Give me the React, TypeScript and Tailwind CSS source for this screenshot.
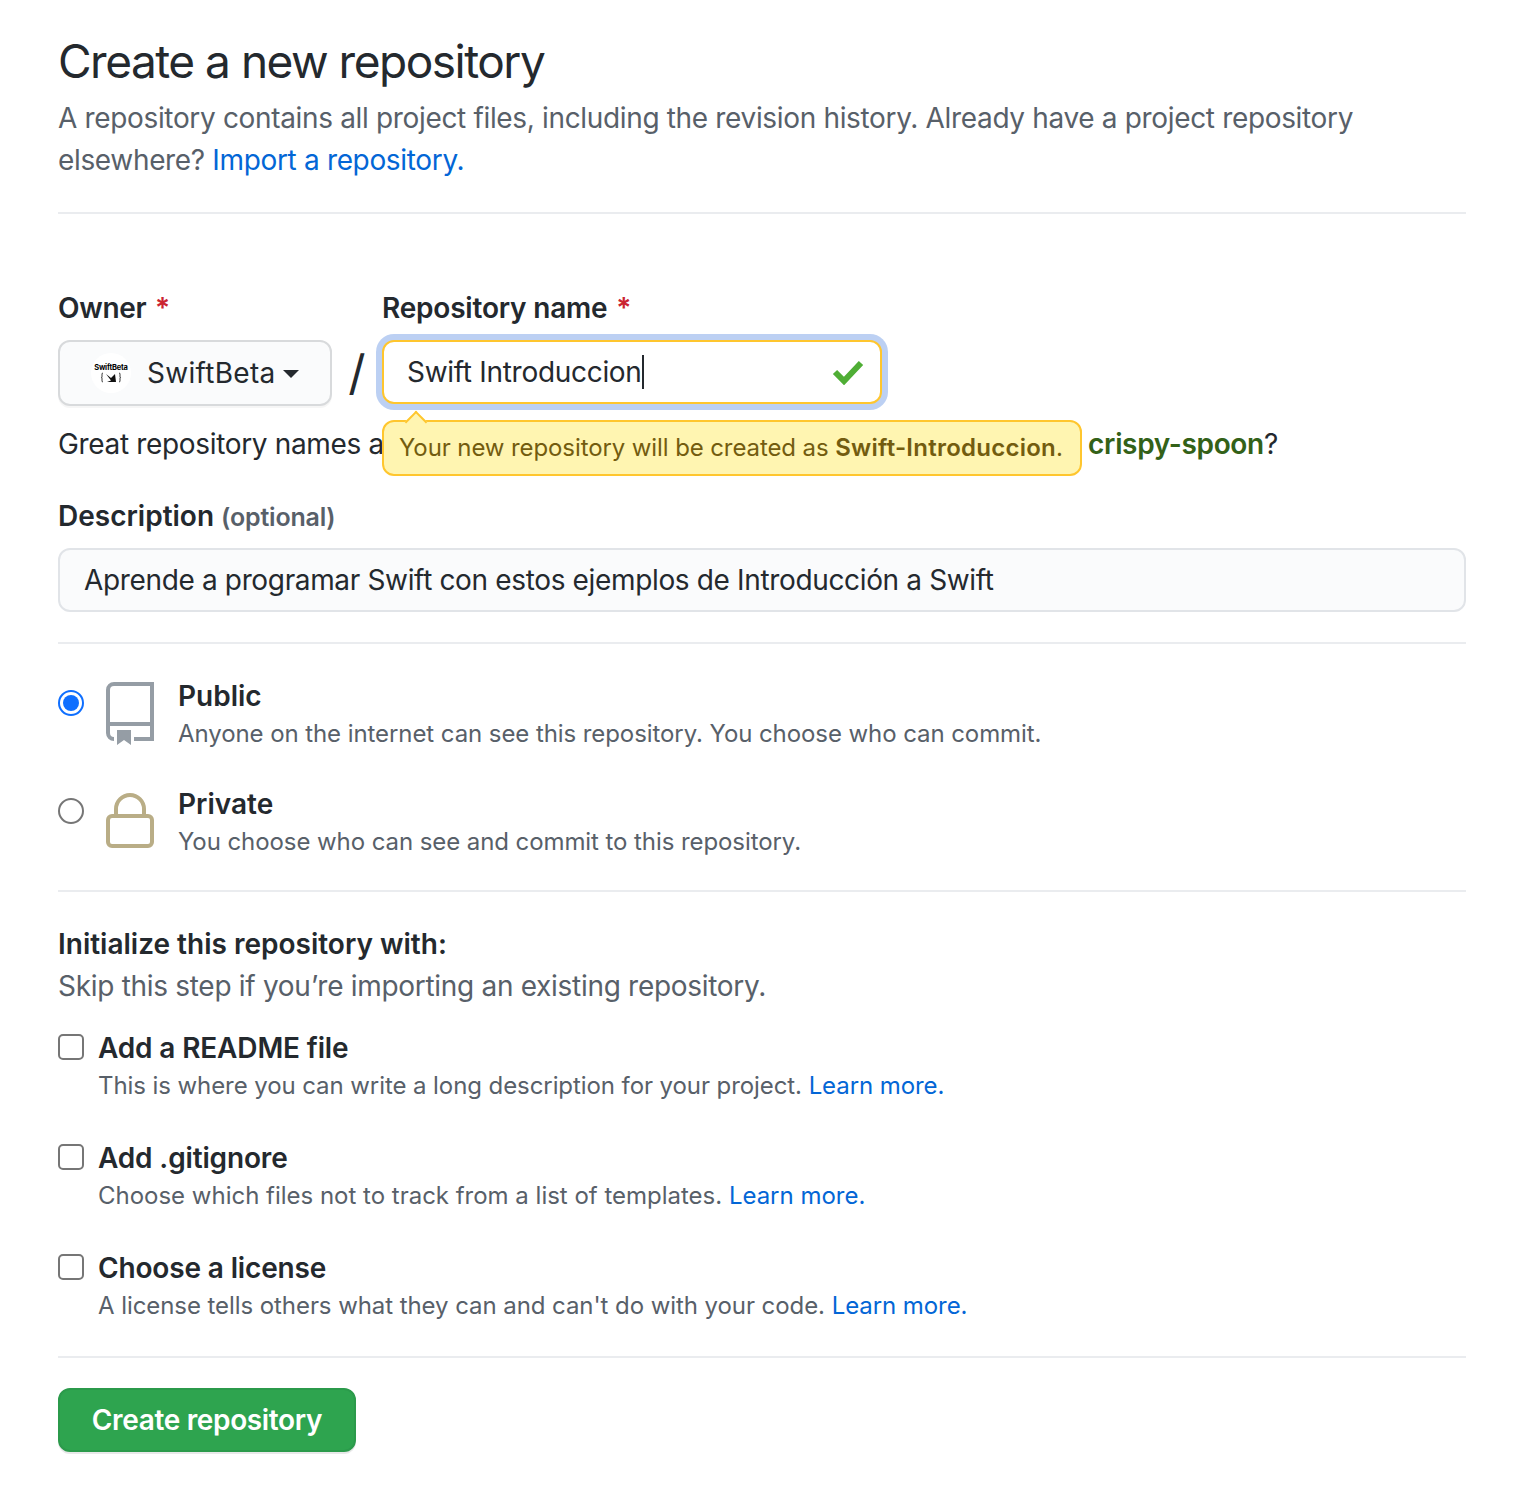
const font = { fontFamily: 'Inter, "Noto Sans", sans-serif' }

function Radio({ checked }: { checked?: boolean }) {
  return (
    <span className={`w-[26px] h-[26px] rounded-full shrink-0 border-2 flex items-center justify-center ${checked ? 'border-[#0f6fff]' : 'border-[#767676]'}`}>
      {checked && <span className="w-[16px] h-[16px] rounded-full bg-[#0f6fff]" />}
    </span>
  )
}

function RepoIcon() {
  return (
    <svg width="48" height="64" viewBox="0 0 48 64" fill="none" className="shrink-0 mt-[1px]">
      <path d="M46 2H8a6 6 0 0 0-6 6v43a6 6 0 0 0 6 6" stroke="#959da5" strokeWidth="4" />
      <path d="M46 0v57H28" stroke="#959da5" strokeWidth="4" />
      <path d="M2 42h44" stroke="#959da5" strokeWidth="4" />
      <path d="M11 48h14v15l-7-5-7 5z" fill="#959da5" />
    </svg>
  )
}

function LockIcon() {
  return (
    <svg width="48" height="56" viewBox="0 0 48 56" fill="none" className="shrink-0 mt-[4px]">
      <rect x="2" y="23" width="44" height="30" rx="4" stroke="#b9ad86" strokeWidth="4" />
      <path d="M10 23v-7a14 14 0 0 1 28 0v7" stroke="#b9ad86" strokeWidth="4" />
    </svg>
  )
}

function InitOption({ title, text, spacing }: { title: string; text: string; spacing: string }) {
  return (
    <div className="flex gap-[14px] mb-[39px]">
      <span className="w-[26px] h-[26px] rounded-[5px] border-2 border-[#767676] shrink-0 mt-[1px]" />
      <div>
        <div className="text-[28px] leading-[30px] font-semibold text-[#24292e] tracking-[-0.15px]">{title}</div>
        <div className={`text-[24px] leading-[36px] mt-[5px] text-[#586069] ${spacing}`}>
          {text} <a className="text-[#0366d6]">Learn more.</a>
        </div>
      </div>
    </div>
  )
}

export default function App() {
  return (
    <div style={font} className="w-[1514px] min-h-[1510px] bg-white pl-[58px] pr-[48px] pt-[31px]">
      <h1 className="text-[46px] leading-[60px] font-normal text-[#24292e] tracking-[-1.5px]">Create a new repository</h1>
      <p className="text-[28px] leading-[42px] mt-[6px] text-[#586069] tracking-[-0.34px]">
        A repository contains all project files, including the revision history. Already have a project repository elsewhere? <a className="text-[#0366d6]">Import a repository.</a>
      </p>
      <div className="h-[2px] bg-[#eaecef] mt-[31px]" />

      <div className="flex mt-[73px]">
        <div>
          <div className="text-[28px] leading-[42px] font-semibold text-[#24292e] mb-[11px] tracking-[-0.3px]">Owner <span className="text-[#cb2431] ml-[2px]">*</span></div>
          <div className="w-[274px] h-[66px] rounded-[12px] border-2 border-[#d8dadc] bg-[#fafbfc] flex items-center pl-[31px] shadow-[0_2px_0_rgba(27,31,35,0.04)]">
            <span className="w-[40px] h-[40px] rounded-full bg-white flex flex-col items-center justify-center text-black shrink-0">
              <span className="text-[7.5px] leading-[8px] font-bold tracking-[-0.2px]">SwiftBeta</span>
              <svg width="20" height="11" viewBox="0 0 20 11" fill="none">
                <path d="M2 1C1 1 1 2 1 3.500S1 5.500 0.500 5.500C1 5.500 1 6 1 7.500S1 10 2 10M18 1C19 1 19 2 19 3.500S19 5.500 19.500 5.500C19 5.500 19 6 19 7.500S19 10 18 10" stroke="#222" strokeWidth="1" />
                <path d="M5 2l5 4 4-4 1 8H6l4-1.500z" fill="#111" />
              </svg>
            </span>
            <span className="text-[28px] text-[#24292e] ml-[16px] tracking-[0.3px]">SwiftBeta</span>
            <span className="ml-[7px] mt-[2px] w-0 h-0 border-x-[8px] border-x-transparent border-t-[8px] border-t-[#24292e]" />
          </div>
        </div>
        <div className="w-[50px] flex justify-center items-end text-[48px] leading-[66px] text-[#24292e]">/</div>
        <div className="relative">
          <div className="text-[28px] leading-[42px] font-semibold text-[#24292e] mb-[11px] tracking-[-0.2px]">Repository name <span className="text-[#cb2431] ml-[2px]">*</span></div>
          <div className="w-[500px] h-[64px] rounded-[12px] border-2 border-[#ffc62e] bg-white shadow-[0_0_0_6px_#bcd0f3] flex items-center pl-[23px] pr-[16px] text-[28px] text-[#24292e]">
            <span className="tracking-[-0.3px]">Swift Introduccion</span>
            <span className="w-[2px] h-[34px] bg-[#24292e]" />
            <svg width="32" height="26" viewBox="0 0 32 26" className="ml-auto" fill="none">
              <path d="M3 13l9 9L29 4" stroke="#4fae35" strokeWidth="6" />
            </svg>
          </div>
          <div className="absolute left-0 top-[133px] w-[700px] h-[56px] rounded-[12px] border-2 border-[#ffc62e] bg-[#fff5b1] flex items-center pl-[15px] text-[24px] text-[#735c0f] whitespace-nowrap z-10">
            <span className="absolute left-[24px] -top-[8px] w-[16px] h-[16px] rotate-45 bg-[#fff5b1] border-l-2 border-t-2 border-[#ffc62e]" />
            <span className="tracking-[-0.1px]">Your new repository will be created as <b className="font-semibold tracking-[0.25px]">Swift-Introduccion</b>.</span>
          </div>
        </div>
      </div>

      <p className="text-[28px] leading-[42px] mt-[17px] text-[#24292e] whitespace-nowrap tracking-[-0.34px]">
        Great repository names are short and memorable. Need inspiration? How about <b className="font-semibold text-[#336118]">crispy-spoon</b>?
      </p>

      <div className="text-[28px] leading-[42px] font-semibold text-[#24292e] mt-[30px]">Description <span className="text-[25px] text-[#586069] tracking-[-0.2px]">(optional)</span></div>
      <div className="h-[64px] mt-[10px] rounded-[12px] border-2 border-[#e1e4e8] bg-[#fafbfc] flex items-center pl-[24px] text-[28px] text-[#24292e] tracking-[-0.35px]">Aprende a programar Swift con estos ejemplos de Introducción a Swift</div>
      <div className="h-[2px] bg-[#eaecef] mt-[30px]" />

      <div className="flex items-start mt-[37px]">
        <span className="mt-[9px] mr-[22px]"><Radio checked /></span>
        <RepoIcon />
        <div className="ml-[24px]">
          <div className="text-[28px] leading-[30px] font-semibold text-[#24292e]">Public</div>
          <div className="text-[24px] leading-[36px] mt-[5px] text-[#586069] tracking-[-0.08px]">Anyone on the internet can see this repository. You choose who can commit.</div>
        </div>
      </div>
      <div className="flex items-start mt-[37px]">
        <span className="mt-[9px] mr-[22px]"><Radio /></span>
        <LockIcon />
        <div className="ml-[24px]">
          <div className="text-[28px] leading-[30px] font-semibold text-[#24292e]">Private</div>
          <div className="text-[24px] leading-[36px] mt-[5px] text-[#586069] tracking-[-0.08px]">You choose who can see and commit to this repository.</div>
        </div>
      </div>
      <div className="h-[2px] bg-[#eaecef] mt-[30px]" />

      <div className="text-[28px] leading-[42px] font-semibold text-[#24292e] mt-[31px]">Initialize this repository with:</div>
      <div className="text-[28px] leading-[42px] text-[#586069] mb-[26px] tracking-[-0.3px]">Skip this step if you’re importing an existing repository.</div>

      <InitOption spacing="tracking-[-0.08px]" title="Add a README file" text="This is where you can write a long description for your project." />
      <InitOption spacing="tracking-[-0.01px]" title="Add .gitignore" text="Choose which files not to track from a list of templates." />
      <InitOption spacing="tracking-[-0.07px]" title="Choose a license" text="A license tells others what they can and can't do with your code." />

      <div className="h-[2px] bg-[#eaecef] -mt-[7px]" />
      <button className="mt-[30px] w-[298px] h-[64px] rounded-[12px] bg-[#2ea44f] border-2 border-[#2b9a4b] text-white text-[28px] font-semibold tracking-[-0.35px] shadow-[0_2px_0_rgba(27,31,35,0.1)]">Create repository</button>
    </div>
  )
}
